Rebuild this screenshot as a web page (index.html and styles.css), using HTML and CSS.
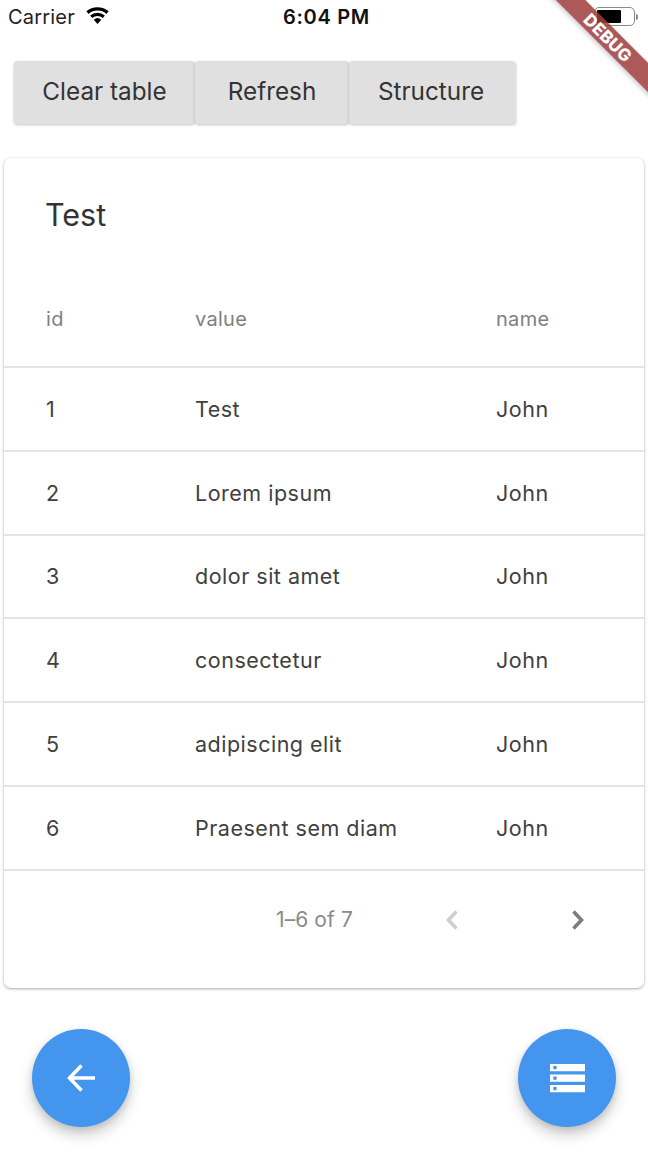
FILE: index.html
```html
<!DOCTYPE html>
<html lang="en">
<head>
<meta charset="utf-8">
<title>Test</title>
<link rel="stylesheet" href="styles.css">
</head>
<body>
<div class="app">
  <header class="status">
    <div class="status-left">
      <span>Carrier</span>
      <svg class="wifi" viewBox="0 0 26 18" width="25" height="17"><path d="M13 18l-4-4.600a6 6 0 0 1 8 0z"/><path d="M7.400 11.600L5.200 9a12 12 0 0 1 15.600 0l-2.200 2.600a8.600 8.600 0 0 0-11.200 0z"/><path d="M3.600 7.300L1.200 4.600a18 18 0 0 1 23.600 0l-2.400 2.700a14.400 14.400 0 0 0-18.800 0z"/></svg>
    </div>
    <div class="status-time">6:04 PM</div>
    <div class="status-right">
      <div class="battery"><div class="battery-fill"></div></div>
      <div class="battery-tip"></div>
    </div>
  </header>
  <div class="debug-banner"><span>DEBUG</span></div>
  <div class="actions">
    <button class="btn btn-clear">Clear table</button>
    <button class="btn btn-refresh">Refresh</button>
    <button class="btn btn-structure">Structure</button>
  </div>
  <section class="card">
    <h1 class="title">Test</h1>
    <div class="row head"><span>id</span><span>value</span><span>name</span></div>
    <div class="row"><span>1</span><span>Test</span><span>John</span></div>
    <div class="row"><span>2</span><span>Lorem ipsum</span><span>John</span></div>
    <div class="row"><span>3</span><span>dolor sit amet</span><span>John</span></div>
    <div class="row"><span>4</span><span>consectetur</span><span>John</span></div>
    <div class="row"><span>5</span><span>adipiscing elit</span><span>John</span></div>
    <div class="row"><span>6</span><span>Praesent sem diam</span><span>John</span></div>
    <div class="pager">
      <span class="pager-text">1–6 of 7</span>
      <svg class="chev chev-prev" viewBox="0 0 14 22" width="14" height="22"><path d="M11.500 2.500L3.500 11l8 8.500"/></svg>
      <svg class="chev chev-next" viewBox="0 0 14 22" width="14" height="22"><path d="M2.500 2.500l8 8.500-8 8.500"/></svg>
    </div>
  </section>
  <div class="fabs">
    <button class="fab" aria-label="Back"><svg viewBox="0 0 30 30" width="30" height="30"><path class="arrow" d="M29 15H3.500M15.500 2.500L3.500 15l12 12.500"/></svg></button>
    <button class="fab" aria-label="Structure"><svg viewBox="0 0 35 29" width="35" height="29"><path class="stack" fill-rule="evenodd" d="M0 0h35v7.300H0zM3.300 2v3.300h3.300V2zM0 10.500h35v7.300H0zM3.300 12.500v3.300h3.300v-3.300zM0 21h35v7.300H0zM3.300 23v3.300h3.300V23z"/></svg></button>
  </div>
</div>
</body>
</html>
```
FILE: styles.css
```css
* { box-sizing: border-box; }
html, body { margin: 0; padding: 0; }
body {
  width: 648px;
  height: 1162px;
  overflow: hidden;
  background: #fff;
  font-family: Inter, "Liberation Sans", sans-serif;
  color: #2e2e2e;
}
.app { position: relative; width: 648px; height: 1162px; overflow: hidden; }

.status {
  display: grid;
  grid-template-columns: 1fr auto 1fr;
  align-items: center;
  height: 33px;
  padding: 0 8px;
  color: #111;
  font-size: 20px;
}
.status-left { display: flex; align-items: center; gap: 10px; font-weight: 400; color: #222; letter-spacing: .2px; }
.wifi { fill: #000; margin-top: -3px; }
.status-time { font-weight: 600; font-size: 20px; letter-spacing: .7px; margin-left: 5px; }
.status-right { display: flex; align-items: center; justify-content: flex-end; padding-right: 2px; }
.battery {
  width: 41px; height: 19px;
  border: 1px solid #8a8a8a;
  border-radius: 5px;
  padding: 2px;
}
.battery-fill { width: 24px; height: 100%; background: #000; border-radius: 1px; }
.battery-tip { width: 2px; height: 6px; background: #8a8a8a; margin-left: 1px; border-radius: 0 2px 2px 0; }

.debug-banner {
  position: absolute;
  top: 27px;
  left: 528px;
  width: 160px;
  height: 21px;
  background: rgba(160, 60, 60, .85);
  box-shadow: 0 2px 5px rgba(0, 0, 0, .2);
  transform: rotate(45deg);
  display: flex;
  align-items: center;
  justify-content: center;
  color: #fff;
  font-size: 17px;
  font-weight: 800;
  letter-spacing: .2px;
}

.actions { display: flex; margin: 28px 0 0 14px; }
.btn {
  height: 63px;
  border: 0;
  border-radius: 4px;
  background: #e0e0e0;
  box-shadow: 0 1px 3px rgba(0, 0, 0, .24);
  font: 400 24.300px Inter, "Liberation Sans", sans-serif;
  color: #333;
  padding: 0 0 3px;
}
.btn-clear { width: 181px; }
.btn-refresh { width: 154px; }
.btn-structure { width: 167px; padding-right: 3px; }

.card {
  margin: 34px 4px 0;
  height: 830px;
  background: #fff;
  border-radius: 7px;
  box-shadow: 0 1px 3px rgba(0, 0, 0, .32), 0 0 2px rgba(0, 0, 0, .05);
}
.title {
  margin: 0;
  height: 113px;
  padding-left: 41px;
  display: flex;
  align-items: center;
  font-size: 30.500px;
  font-weight: 400;
  color: #333;
}
.row {
  display: grid;
  grid-template-columns: 149px 301px 1fr;
  align-items: center;
  height: 83.800px;
  padding: 0 0 0 42px;
  border-bottom: 2px solid #e4e4e4;
  font-size: 21.500px;
  letter-spacing: .5px;
  color: #404040;
}
.row.head { height: 97px; padding-top: 1px; color: #7f7f7f; font-size: 20px; letter-spacing: .3px; }
.pager {
  display: flex;
  align-items: center;
  height: 98px;
  color: #8a8a8a;
  font-size: 21px;
  letter-spacing: .1px;
}
.pager-text { margin-left: 272px; }
.chev { fill: none; stroke-width: 3.600px; }
.chev-prev { stroke: #cfcfcf; margin-left: 92px; }
.chev-next { stroke: #7d7d7d; margin-left: 112px; }

.fabs { display: flex; justify-content: space-between; padding: 0 32px; margin-top: 41px; }
.fab {
  width: 98px; height: 98px;
  border: 0;
  padding: 0;
  border-radius: 50%;
  background: #4395ee;
  box-shadow: 0 8px 14px rgba(0, 0, 0, .2), 0 2px 6px rgba(0, 0, 0, .1);
  display: flex;
  align-items: center;
  justify-content: center;
}
.arrow { fill: none; stroke: #fff; stroke-width: 3.500px; }
.stack { fill: #fff; }
```
